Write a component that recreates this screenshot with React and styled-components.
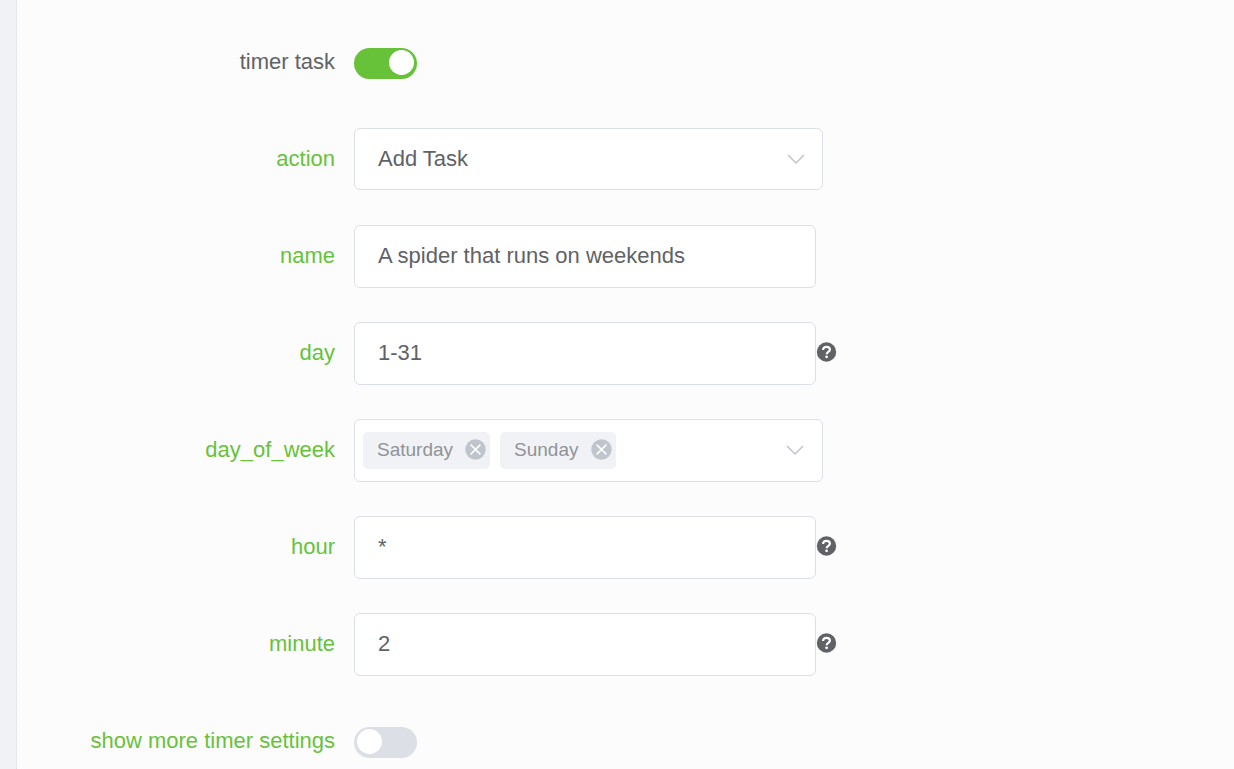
import { useState } from "react";
import styled, { createGlobalStyle } from "styled-components";

const GlobalStyle = createGlobalStyle`
  * {
    box-sizing: border-box;
  }

  body {
    margin: 0;
    background-color: #fcfcfc;
    color: #606266;
    font-family: "Liberation Sans", Arial, sans-serif;
    font-size: 22px;
  }
`;

const Container = styled.div`
  display: flex;
  height: 100vh;
`;

const Gutter = styled.aside`
  flex: 0 0 17px;
  background-color: #f0f2f5;
  border-right: 1px dotted #dcdfe6;
`;

const Form = styled.form`
  flex: 1;
  overflow-y: auto;
  scrollbar-width: none;
  display: flex;
  flex-direction: column;
  gap: 34px;
  padding-top: 31px;
`;

const Row = styled.div`
  display: flex;
  align-items: center;
  flex: 0 0 63px;
`;

const Label = styled.label`
  flex: 0 0 337px;
  padding: 0 19px 2px 0;
  line-height: 24px;
  text-align: right;
  white-space: nowrap;
  color: ${(props) => (props.$plain ? "#606266" : "#67c23a")};
`;

const Switch = styled.input`
  appearance: none;
  display: flex;
  width: 63px;
  height: 31px;
  margin: 2px 0 0;
  padding: 2px 3px;
  border-radius: 16px;
  background-color: #dcdfe6;
  cursor: pointer;

  &::before {
    content: "";
    width: 25px;
    height: 25px;
    border-radius: 50%;
    background-color: white;
  }

  &:checked {
    justify-content: flex-end;
    background-color: #67c23a;
  }
`;

const Input = styled.input`
  width: 462px;
  height: 63px;
  padding: 0 23px 2px;
  border: 1px solid #dcdfe6;
  border-radius: 6px;
  background-color: white;
  color: inherit;
  font: inherit;
  outline: none;
`;

const SelectWrapper = styled.div`
  display: grid;
  align-items: center;
  align-self: flex-start;
  width: 469px;
`;

const Select = styled.select`
  grid-area: 1 / 1;
  appearance: none;
  width: 100%;
  height: 62px;
  padding: 0 60px 2px 23px;
  border: 1px solid #dcdfe6;
  border-radius: 6px;
  background-color: white;
  color: inherit;
  font: inherit;
  outline: none;
`;

const SelectArrow = styled.span`
  grid-area: 1 / 1;
  justify-self: end;
  display: flex;
  margin-right: 18px;
  pointer-events: none;
`;

const TagBox = styled.div`
  display: flex;
  align-items: center;
  gap: 10px;
  width: 469px;
  height: 63px;
  padding: 0 18px 0 8px;
  border: 1px solid #dcdfe6;
  border-radius: 6px;
  background-color: white;
`;

const Tag = styled.span`
  display: flex;
  align-items: center;
  gap: 12px;
  height: 37px;
  padding: 0 4px 2px 14px;
  border-radius: 5px;
  background-color: #f0f2f5;
  color: #909399;
  font-size: 19px;
`;

const IconButton = styled.button`
  display: flex;
  padding: 0;
  border: none;
  background: none;
  cursor: pointer;
`;

const ArrowButton = styled(IconButton)`
  margin-left: auto;
  padding-bottom: 2px;
`;

const HelpButton = styled(IconButton)`
  padding-bottom: 3px;
`;

const Chevron = () => (
  <svg width="18" height="12" viewBox="0 0 18 12" fill="none" aria-hidden="true">
    <path d="M1 2l8 8 8-8" stroke="#c0c4cc" strokeWidth="1.5" />
  </svg>
);

const CloseIcon = () => (
  <svg width="21" height="21" viewBox="0 0 21 21" fill="none" aria-hidden="true">
    <circle cx="10.5" cy="10.5" r="10.2" fill="#c0c4cc" />
    <path
      d="M5.6 5.6l9.8 9.8M15.4 5.6l-9.8 9.8"
      stroke="white"
      strokeWidth="1.5"
    />
  </svg>
);

const HelpIcon = () => (
  <svg width="21" height="20" viewBox="0 0 21 20" fill="none" aria-hidden="true">
    <circle cx="10.5" cy="10" r="9.7" fill="#606266" />
    <path
      d="M7.1 7.9c0-2 1.4-3.1 3.4-3.1s3.4 1.1 3.4 2.8c0 2.3-3.2 2.3-3.2 4.7"
      stroke="white"
      strokeWidth="2.2"
    />
    <circle cx="10.6" cy="14.8" r="1.4" fill="white" />
  </svg>
);

const TextField = ({ name, value, help }) => (
  <Row>
    <Label htmlFor={name}>{name}</Label>
    <Input id={name} type="text" defaultValue={value} />
    {help && (
      <HelpButton type="button" aria-label={`${name} help`}>
        <HelpIcon />
      </HelpButton>
    )}
  </Row>
);

const App = () => {
  const [days, setDays] = useState(["Saturday", "Sunday"]);

  return (
    <>
      <GlobalStyle />
      <Container>
        <Gutter />
        <Form>
          <Row>
            <Label htmlFor="timer" $plain>
              timer task
            </Label>
            <Switch id="timer" type="checkbox" role="switch" defaultChecked />
          </Row>
          <Row>
            <Label htmlFor="action">action</Label>
            <SelectWrapper>
              <Select id="action">
                <option>Add Task</option>
              </Select>
              <SelectArrow>
                <Chevron />
              </SelectArrow>
            </SelectWrapper>
          </Row>
          <TextField name="name" value="A spider that runs on weekends" />
          <TextField name="day" value="1-31" help />
          <Row>
            <Label htmlFor="day_of_week">day_of_week</Label>
            <TagBox>
              {days.map((day) => (
                <Tag key={day}>
                  {day}
                  <IconButton
                    type="button"
                    aria-label={`Remove ${day}`}
                    onClick={() => setDays(days.filter((d) => d !== day))}
                  >
                    <CloseIcon />
                  </IconButton>
                </Tag>
              ))}
              <ArrowButton id="day_of_week" type="button" aria-haspopup="listbox">
                <Chevron />
              </ArrowButton>
            </TagBox>
          </Row>
          <TextField name="hour" value="*" help />
          <TextField name="minute" value="2" help />
          <Row>
            <Label htmlFor="more">show more timer settings</Label>
            <Switch id="more" type="checkbox" role="switch" />
          </Row>
        </Form>
      </Container>
    </>
  );
};

export default App;
